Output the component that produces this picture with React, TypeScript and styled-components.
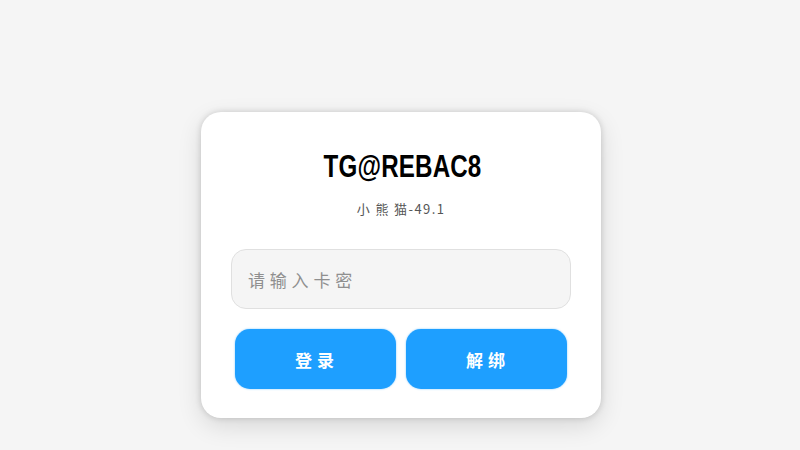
import React from "react";
import styled, { createGlobalStyle } from "styled-components";

const Global = createGlobalStyle`
  html, body { margin: 0; padding: 0; height: 100%; background: #f5f5f5; overflow: hidden; }
  #root { height: 100%; }
`;

const FONT = `"Noto Sans CJK SC", "Noto Sans", sans-serif`;

const Page = styled.div`
  height: 450px;
  box-sizing: border-box;
  padding: 112px 0 0 2px;
  display: flex;
  justify-content: center;
  align-items: flex-start;
  background: #f5f5f5;
  font-family: ${FONT};
`;

const Card = styled.main`
  width: 400px;
  height: 306px;
  box-sizing: border-box;
  padding: 36px 30px 0;
  background: #fff;
  border-radius: 20px;
  box-shadow: 0 0 6px rgba(0, 0, 0, 0.16), 0 8px 24px rgba(0, 0, 0, 0.12);
  display: flex;
  flex-direction: column;
  align-items: center;
`;

const Title = styled.h1`
  margin: 0 0 0 4px;
  font-family: "Liberation Sans", sans-serif;
  font-size: 32px;
  line-height: 36px;
  font-weight: 700;
  color: #000;
  letter-spacing: 0.2px;
  transform: scaleX(0.755);
`;

const Subtitle = styled.p`
  margin: 15px 0 0;
  font-size: 13px;
  line-height: 20px;
  font-weight: 400;
  color: #555;
  letter-spacing: 1.4px;
`;

const Input = styled.input`
  margin-top: 30px;
  width: 340px;
  height: 60px;
  box-sizing: border-box;
  padding: 0 16px;
  background: #f5f5f5;
  border: 1px solid #e0e0e0;
  border-radius: 15px;
  font-family: ${FONT};
  font-size: 17px;
  letter-spacing: 4.8px;
  outline: none;
  &::placeholder { color: #8f8f8f; opacity: 1; font-weight: 400; }
`;

const Actions = styled.div`
  margin-top: 20px;
  display: flex;
  gap: 10px;
`;

const Button = styled.button`
  width: 161px;
  height: 60px;
  border: 0;
  border-radius: 15px;
  background: #1e9fff;
  box-shadow: 0 0 2px rgba(30, 159, 255, 0.6);
  color: #fff;
  font-family: ${FONT};
  font-size: 17px;
  font-weight: 700;
  letter-spacing: 5px;
  padding: 0 0 0 3px;
`;

export default function App() {
  return (
    <>
      <Global />
      <Page>
        <Card>
          <Title>TG@REBAC8</Title>
          <Subtitle>小 熊 猫-49.1</Subtitle>
          <Input placeholder="请输入卡密" />
          <Actions>
            <Button>登录</Button>
            <Button>解绑</Button>
          </Actions>
        </Card>
      </Page>
    </>
  );
}
